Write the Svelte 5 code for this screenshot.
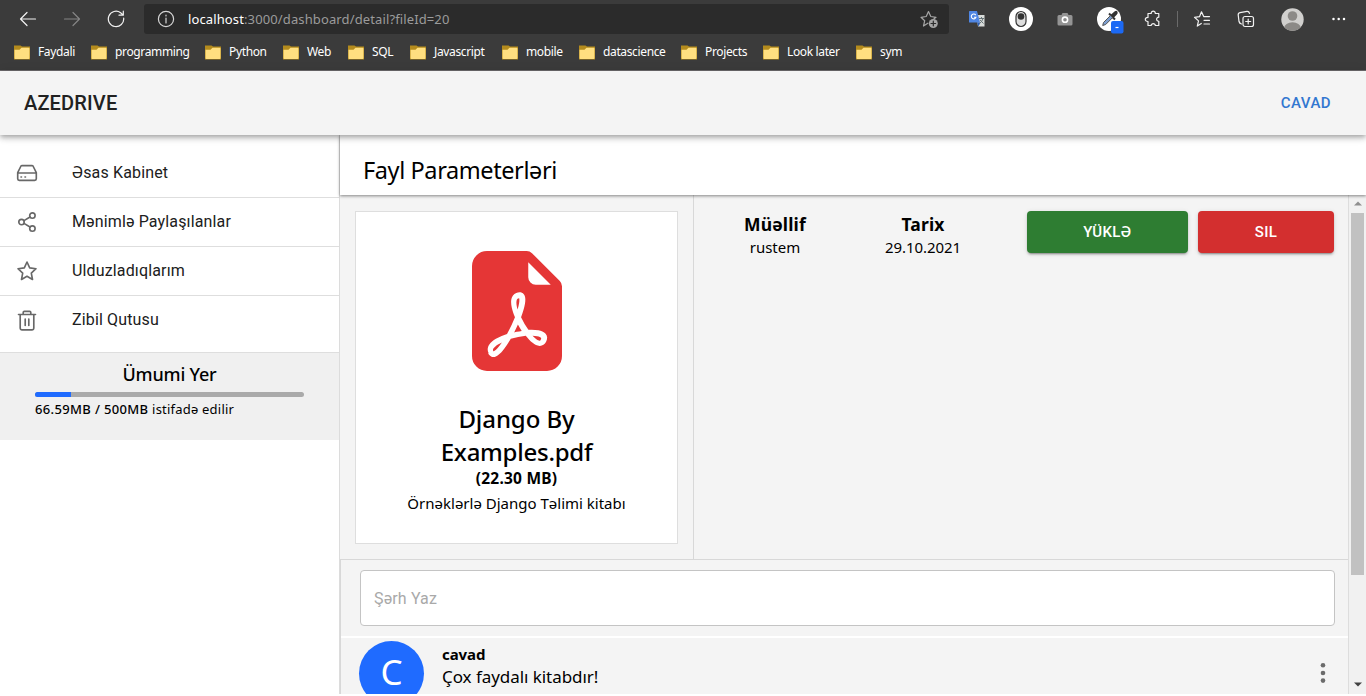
<script>
  const bookmarks = [
    ['Faydali', 77], ['programming', 114], ['Python', 78], ['Web', 65],
    ['SQL', 62], ['Javascript', 92], ['mobile', 77], ['datascience', 102],
    ['Projects', 82], ['Look later', 93], ['sym', 60]
  ];
  const menu = [
    { label: 'Əsas Kabinet', icon: 'drive' },
    { label: 'Mənimlə Paylaşılanlar', icon: 'share' },
    { label: 'Ulduzladıqlarım', icon: 'star' },
    { label: 'Zibil Qutusu', icon: 'trash' }
  ];
  const used = 66.59;
  const total = 500;
</script>

<div class="window">
  <div class="chrome">
    <div class="toolbar">
      <div class="nav">
        <svg width="18" height="18" viewBox="0 0 18 18" class="line bright"><path d="M16.500 9H1.500M8 2.500 1.500 9 8 15.500" /></svg>
        <svg width="18" height="18" viewBox="0 0 18 18" class="line dim"><path d="M1.500 9h15M10 2.500l6.500 6.500-6.500 6.500" /></svg>
        <svg width="18" height="18" viewBox="0 0 18 18" class="line bright"><path d="M16.700 8.200A7.700 7.700 0 1 1 13.600 2.700L16 4.900M16.300 1.200v4h-4.300" /></svg>
      </div>
      <div class="address">
        <svg width="18" height="18" viewBox="0 0 18 18" class="line info"><circle cx="9" cy="9" r="7.600" /><path d="M9 8v5M9 5v1" /></svg>
        <div class="url"><b>localhost</b>:3000/dashboard/detail?fileId=20</div>
        <svg width="20" height="20" viewBox="0 0 20 20" class="line fav">
          <path d="M8.800 14.200 4.500 17l1.200-5.300L2 8.300l5.200-.8L9.500 2.500l2.300 5 5.200.8-2 1.500" />
          <circle cx="14.300" cy="14.500" r="4.500" fill="#a5a5a5" stroke="none" /><path d="M14.300 12.200v4.600M12 14.500h4.600" stroke="#2b2b2b" />
        </svg>
      </div>
      <div class="extensions">
        <svg width="18" height="18" viewBox="0 0 18 18">
          <path d="M8 5h8.500v11.500H10z" fill="#d9dcda" /><path d="M1.500 1H9l3 11.500H1.500Q1 12.500 1 12V1.500Q1 1 1.500 1z" fill="#4f86e3" /><path d="m9 12.500 1.500 4 2-4z" fill="#2c5db3" />
          <path d="M7.700 5.100A2.400 2.400 0 1 0 8 7.200H6" fill="none" stroke="#fff" stroke-width="1.100" /><path d="M11 8.500h5M13.500 7v1.500M15 8.500q-1 3.500-3.500 5M12 10l3.500 3.500" fill="none" stroke="#687578" />
        </svg>
        <svg width="24" height="24" viewBox="0 0 24 24"><circle cx="12" cy="12" r="12" fill="#fff" /><rect x="7" y="4.500" width="10" height="15" rx="5" fill="#ddd" stroke="#333" stroke-width="1.200" /><circle cx="12" cy="9.500" r="3.300" fill="#333" /></svg>
        <svg width="16" height="16" viewBox="0 0 16 16"><path d="M2 4h2.500l1-2h5l1 2H14q1.500 0 1.500 1.500V13q0 1.500-1.500 1.500H2Q.5 14.500.5 13V5.500Q.5 4 2 4z" fill="#949494" /><circle cx="8" cy="8.700" r="2.600" fill="#8b8b8b" stroke="#fff" stroke-width="1.600" /></svg>
        <svg width="27" height="27" viewBox="0 0 27 27"><circle cx="12" cy="12" r="12" fill="#fff" /><path d="m13.500 8 4-3.500q2-1.500 3 .2.800 1.500-.8 3L16 11.500z" fill="#333" /><path d="m12 6.500 6 6" stroke="#333" stroke-width="2" /><path d="m13.500 8.500-7 7-.8 3 3-1 6.800-6.800z" fill="#7d9fd0" stroke="#555" /><rect x="14" y="14" width="12.500" height="12.500" rx="2" fill="#1c69f4" /><path d="M18.500 20.500h3" stroke="#fff" stroke-width="1.200" /></svg>
        <svg width="18" height="18" viewBox="0 0 18 18" class="line bright"><path d="M4 3.500h3.200c-.2-3.100 4.300-3.100 4.100 0h3.500v3.700c-2.900-.2-2.900 4.300 0 4.100v4.200h-3.500c.2-2.400-4.300-2.400-4.100 0H4v-4c-3.600.2-3.600-4.300 0-4.100z" /></svg>
        <i class="rule"></i>
        <svg width="18" height="18" viewBox="0 0 18 18" class="line bright"><path d="m8.300 13.500-4 2.600 1.200-5.200L1.500 7.300l5-.6L8.500 1.800l2.200 4.800H16.500M11 10.300h5.500M11 14h5.500" /></svg>
        <svg width="18" height="18" viewBox="0 0 18 18" class="line bright"><rect x="6" y="6.500" width="10.500" height="10" rx="2" /><path d="M11.200 9v5M8.700 11.500h5M4.500 14Q2.500 13.500 2 11.500L1.200 5Q1 3 3 2.600l7-1.300q2-.2 2.500 2" /></svg>
        <svg width="23" height="23" viewBox="0 0 23 23"><defs><clipPath id="avatar"><circle cx="11.500" cy="11.500" r="11.200" /></clipPath></defs><g clip-path="url(#avatar)"><path d="M0 0h23v23H0z" fill="#d1d0ce" /><circle cx="11.500" cy="8" r="4.800" fill="#8c8a87" /><ellipse cx="11.500" cy="20" rx="8.300" ry="5.800" fill="#8c8a87" /></g></svg>
        <svg width="16" height="4" viewBox="0 0 16 4" fill="#fff"><circle cx="2.500" cy="2" r="1.250" /><circle cx="7.700" cy="2" r="1.250" /><circle cx="13" cy="2" r="1.250" /></svg>
      </div>
    </div>
    <div class="bookmarks">
      {#each bookmarks as [name, width]}
        <div class="bookmark" style="width:{width}px">
          <svg width="16" height="15" viewBox="0 0 16 15"><path d="M0 .5h6.500L8 1.500h8V14.500H0z" fill="#b48b1d" /><path d="M.5 4.800h5l2-2h7.200q.8 0 .8.800v9.700q0 .7-.8.700H1.300Q.5 14 .5 13.300z" fill="#ffdf80" /></svg>
          <span>{name}</span>
        </div>
      {/each}
    </div>
  </div>

  <header class="appbar">
    <div class="brand">AZEDRIVE</div>
    <div class="user">CAVAD</div>
  </header>

  <div class="body">
    <aside>
      <nav>
        {#each menu as item}
          <div class="item">
            <svg width="24" height="24" viewBox="0 0 24 24">
              {#if item.icon === 'drive'}
                <path d="M2.700 12h18.600M6 5 2.700 11.700v6q0 1.600 1.600 1.600h15.400q1.600 0 1.600-1.600v-6L18 5q-.3-.4-1-.4H7q-.7 0-1 .4zM6 16h.5M10 16h.5" />
              {:else if item.icon === 'share'}
                <circle cx="17.400" cy="5.500" r="2.700" /><circle cx="6.500" cy="12" r="2.700" /><circle cx="17.400" cy="18.500" r="2.700" /><path d="m9 10.600 6-3.600M9 13.400l6 3.600" />
              {:else if item.icon === 'star'}
                <path d="m12 3 2.700 5.900 6.300.8-4.700 4.400 1.200 6.400L12 17.300l-5.500 3.200 1.200-6.400L3 9.700l6.300-.8z" />
              {:else}
                <path d="M3.500 5.500h17M8.200 5V3.500q0-1.200 1.200-1.200h5.200q1.200 0 1.200 1.200V5M5.200 5.500v13.700q0 1.600 1.600 1.600h10.400q1.600 0 1.600-1.600V5.500M10.200 10v6.500M13.800 10v6.500" />
              {/if}
            </svg>
            <span>{item.label}</span>
          </div>
        {/each}
      </nav>
      <section class="storage">
        <h2>Ümumi Yer</h2>
        <div class="bar"><div style="width:{(used / total) * 100}%"></div></div>
        <p><b>{used}MB / {total}MB</b> istifadə edilir</p>
      </section>
    </aside>

    <main>
      <div class="title"><h1>Fayl Parameterləri</h1></div>
      <div class="scroller">
        <div class="content">
          <div class="details">
            <div class="left">
              <div class="card">
                <svg width="90" height="120" viewBox="2 0 12 16" fill="#e53636">
                  <path d="M5.523 12.424c.14-.082.293-.162.459-.238a7.878 7.878 0 0 1-.45.606c-.28.337-.498.516-.635.572a.266.266 0 0 1-.035.012.282.282 0 0 1-.026-.044c-.056-.11-.054-.216.04-.36.106-.165.319-.354.647-.548zm2.455-1.647c-.119.025-.237.05-.356.078a21.148 21.148 0 0 0 .5-1.05 12.045 12.045 0 0 0 .51.858c-.217.032-.436.07-.654.114zm2.525.939a3.881 3.881 0 0 1-.435-.41c.228.005.434.022.612.054.317.057.466.147.518.209a.095.095 0 0 1 .026.064.436.436 0 0 1-.06.2.307.307 0 0 1-.094.124.107.107 0 0 1-.069.015c-.09-.003-.258-.066-.498-.256zM8.278 6.970c-.04.244-.108.524-.2.829a4.860 4.860 0 0 1-.089-.346c-.076-.353-.087-.63-.046-.822.038-.177.11-.248.196-.283a.517.517 0 0 1 .145-.04c.013.03.028.092.032.198.005.122-.007.277-.038.465z" />
                  <path fill-rule="evenodd" d="M4 0h5.293A1 1 0 0 1 10 .293L13.707 4a1 1 0 0 1 .293.707V14a2 2 0 0 1-2 2H4a2 2 0 0 1-2-2V2a2 2 0 0 1 2-2zm5.500 1.500v2a1 1 0 0 0 1 1h2l-3-3zM4.165 13.668c.09.18.23.343.438.419.207.075.412.04.58-.03.318-.13.635-.436.933-.794.34-.41.697-.947 1.058-1.570a11.600 11.600 0 0 1 1.997-.406c.3.383.61.713.91.95.28.22.603.403.934.417a.856.856 0 0 0 .51-.138c.155-.101.27-.247.354-.416.09-.181.145-.37.138-.563a.844.844 0 0 0-.2-.518c-.226-.27-.596-.4-.96-.465a5.760 5.760 0 0 0-1.335-.05 10.954 10.954 0 0 1-.98-1.686c.25-.66.437-1.284.52-1.794.036-.218.055-.426.048-.614a1.238 1.238 0 0 0-.127-.538.7.7 0 0 0-.477-.365c-.202-.043-.41 0-.601.077-.377.15-.576.47-.651.823-.073.34-.04.736.046 1.136.088.406.238.848.43 1.295a19.700 19.700 0 0 1-1.062 2.227 7.662 7.662 0 0 0-1.482.645c-.37.22-.699.48-.897.787-.21.326-.275.714-.08 1.103z" />
                </svg>
                <h3><span>Django By</span><br />Examples.pdf</h3>
                <div class="size">(22.30 MB)</div>
                <div class="desc">Örnəklərlə Django Təlimi kitabı</div>
              </div>
            </div>
            <div class="right">
              <div class="meta"><b>Müəllif</b><span>rustem</span></div>
              <div class="meta"><b>Tarix</b><span>29.10.2021</span></div>
              <button class="download">YÜKLƏ</button>
              <button class="delete">SIL</button>
            </div>
          </div>
          <div class="comments">
            <div class="write"><input placeholder="Şərh Yaz" /></div>
            <div class="comment">
              <div class="avatar">C</div>
              <div class="message"><b>cavad</b><span>Çox faydalı kitabdır!</span></div>
              <svg width="6" height="22" viewBox="0 0 6 22" fill="#6b6b6b"><circle cx="3" cy="3.300" r="2.300" /><circle cx="3" cy="11" r="2.300" /><circle cx="3" cy="18.600" r="2.300" /></svg>
            </div>
          </div>
        </div>
        <div class="scrollbar">
          <svg width="8" height="5" viewBox="0 0 8 5" fill="#8f8f8f"><path d="m4 .5 4 4H0z" /></svg>
          <div class="thumb"></div>
          <svg width="8" height="5" viewBox="0 0 8 5" fill="#404040"><path d="M0 .5h8l-4 4z" /></svg>
        </div>
      </div>
    </main>
  </div>
</div>

<style>
  :global(body) { background: #fff; overflow: hidden; }
  .window { width: 1366px; height: 694px; display: flex; flex-direction: column; overflow: hidden; font-family: "Noto Sans", "Open Sans", sans-serif; color: #000; }
  .window * { box-sizing: border-box; }
  svg { display: block; flex: none; }
  h1, h2, h3, p { margin: 0; font-weight: 400; }

  .chrome { height: 71px; flex: none; background: #3b3b3b; border-bottom: 1px solid #6b686b; color: #fff; }
  .toolbar { height: 38px; display: flex; align-items: center; }
  .nav { width: 144px; display: flex; gap: 26px; padding-left: 19px; }
  .line { fill: none; stroke-width: 1.200; stroke-linejoin: round; stroke-linecap: round; }
  .bright { stroke: #f2f2f2; }
  .dim { stroke: #858585; }
  .info { stroke: #d5d5d5; }
  .fav { stroke: #a5a5a5; }
  .address { width: 805px; height: 30px; display: flex; align-items: center; background: #2b2b2b; border-radius: 3px; padding: 0 10px 0 13px; }
  .url { flex: 1; margin-left: 13px; font-size: 13px; letter-spacing: 0.120px; color: #9b9b9b; white-space: nowrap; }
  .url b { font-weight: 400; color: #fff; }
  .extensions { display: flex; align-items: center; flex: 1; padding-left: 19px; }
  .extensions svg:nth-child(2) { margin-left: 23px; }
  .extensions svg:nth-child(3) { margin-left: 24px; }
  .extensions svg:nth-child(4) { margin: 3px 0 0 24px; }
  .extensions svg:nth-child(5) { margin-left: 20px; }
  .rule { width: 1px; height: 16px; background: #6a6a6a; margin-left: 15px; }
  .extensions svg:nth-child(7) { margin-left: 15px; }
  .extensions svg:nth-child(8) { margin-left: 26px; }
  .extensions svg:nth-child(9) { margin-left: 26px; }
  .extensions svg:nth-child(10) { margin-left: 27px; }
  .bookmarks { display: flex; height: 28px; padding-left: 14px; }
  .bookmark { display: flex; gap: 8px; align-items: center; flex: none; font-size: 12px; letter-spacing: -0.360px; white-space: nowrap; }
  .bookmark span { padding-bottom: 1px; }

  .appbar { height: 64px; flex: none; display: flex; justify-content: space-between; align-items: center; padding: 0 35px 0 24px; background: #f4f4f4; box-shadow: 0 2px 4px -1px #0003, 0 4px 5px #00000024, 0 1px 10px #0000001f; z-index: 2; font-family: Roboto, sans-serif; font-weight: 500; }
  .brand { font-size: 20px; letter-spacing: 0.150px; color: #212121; }
  .user { font-size: 15px; letter-spacing: 0.430px; color: #3277d0; }

  .body { flex: 1; min-height: 0; display: flex; }
  aside { width: 340px; flex: none; border-right: 1px solid #dcdcdc; font-family: Roboto, sans-serif; }
  nav { padding-top: 14px; height: 217px; }
  .item { height: 49px; display: flex; align-items: center; gap: 33px; padding-left: 15px; border-bottom: 1px solid #dedede; font-size: 16px; letter-spacing: 0.150px; color: #202020; }
  .item span { padding-bottom: 2px; }
  .item:last-child { border-bottom: 0; }
  .item svg { fill: none; stroke: #686868; stroke-width: 1.650; stroke-linecap: round; stroke-linejoin: round; }
  .storage { height: 88px; padding: 8px 35px 0; background: #f0f0f0; border-top: 1px solid #dedede; font-family: "Noto Sans", sans-serif; }
  .storage h2 { font-size: 18px; line-height: 26px; font-weight: 500; text-align: center; letter-spacing: -0.200px; }
  .bar { height: 5px; margin-top: 5px; border-radius: 3px; overflow: hidden; background: #aaa; }
  .bar div { height: 100%; background: #1f6bff; }
  .storage p { font-size: 13px; line-height: 19px; margin-top: 3px; white-space: nowrap; letter-spacing: 0.210px; }
  .storage b { font-weight: 500; letter-spacing: 0.350px; }

  main { flex: 1; min-width: 0; display: flex; flex-direction: column; }
  .title { height: 60px; flex: none; background: #fff; padding: 18px 23px 0; box-shadow: 0 1px 3px #0007; z-index: 1; }
  h1 { font-size: 23.500px; line-height: 34px; white-space: nowrap; letter-spacing: -0.400px; }
  .scroller { flex: 1; min-height: 0; display: flex; }
  .content { width: 1009px; background: #f4f4f4; border-right: 1px solid #ddd; }
  .details { height: 365px; display: flex; border-bottom: 1px solid #d8d8d8; }
  .left { width: 354px; flex: none; border-right: 1px solid #d8d8d8; padding: 16px 15px; }
  .card { width: 323px; height: 333px; background: #fff; border: 1px solid #dedede; display: flex; flex-direction: column; align-items: center; padding-top: 39px; text-align: center; white-space: nowrap; }
  h3 { font-size: 24px; line-height: 33px; font-weight: 500; margin-top: 31px; letter-spacing: -0.250px; }
  h3 span { letter-spacing: -0.080px; }
  .size { font-size: 15.500px; line-height: 20px; font-weight: 700; letter-spacing: 0.220px; }
  .desc { font-size: 15px; line-height: 25px; margin-top: 3px; }
  .right { flex: 1; display: flex; align-items: flex-start; padding: 16px 14px 0 7px; }
  .meta { width: 148px; display: flex; flex-direction: column; align-items: center; }
  .meta b { font-size: 17.500px; line-height: 27px; letter-spacing: 0.150px; }
  .meta span { font-size: 15px; line-height: 20px; margin-top: -1px; letter-spacing: -0.050px; }
  button { height: 42px; border: 0; border-radius: 4px; padding: 0; color: #fff; font: 500 15px Roboto, sans-serif; letter-spacing: 0.430px; box-shadow: 0 3px 1px -2px #0003, 0 2px 2px #00000024, 0 1px 5px #0000001f; }
  .download { width: 161px; margin-left: 30px; background: #2e7d32; }
  .delete { width: 136px; margin-left: 10px; background: #d32f2f; }
  .comments { height: 134px; overflow: hidden; border-left: 1px solid #d8d8d8; }
  .write { height: 78px; padding: 10px 13px 0 19px; border-bottom: 2px solid #fff; }
  input { display: block; width: 975px; height: 56px; padding: 0 13px; border: 1px solid #c4c4c4; border-radius: 4px; background: #fff; font: 16px Roboto, sans-serif; letter-spacing: 0.150px; }
  input::placeholder { color: #a9a9a9; opacity: 1; }
  .comment { display: flex; padding: 3px 22px 0 18px; align-items: flex-start; }
  .avatar { width: 65px; height: 65px; border-radius: 50%; background: #1f6bff; color: #fff; font: 35px/62px "Noto Sans", sans-serif; text-align: center; }
  .message { flex: 1; display: flex; flex-direction: column; margin-left: 18px; white-space: nowrap; }
  .message b { font-size: 15px; line-height: 24px; margin-top: 1px; letter-spacing: -0.100px; }
  .message span { font-size: 17px; line-height: 22px; letter-spacing: -0.050px; }
  .comment svg { margin-top: 21px; }
  .scrollbar { width: 17px; background: #f1f1f1; display: flex; flex-direction: column; align-items: center; padding: 6px 0 7px; }
  .thumb { width: 13px; height: 362px; margin: 7px 0 auto; background: #c1c1c1; }
</style>
